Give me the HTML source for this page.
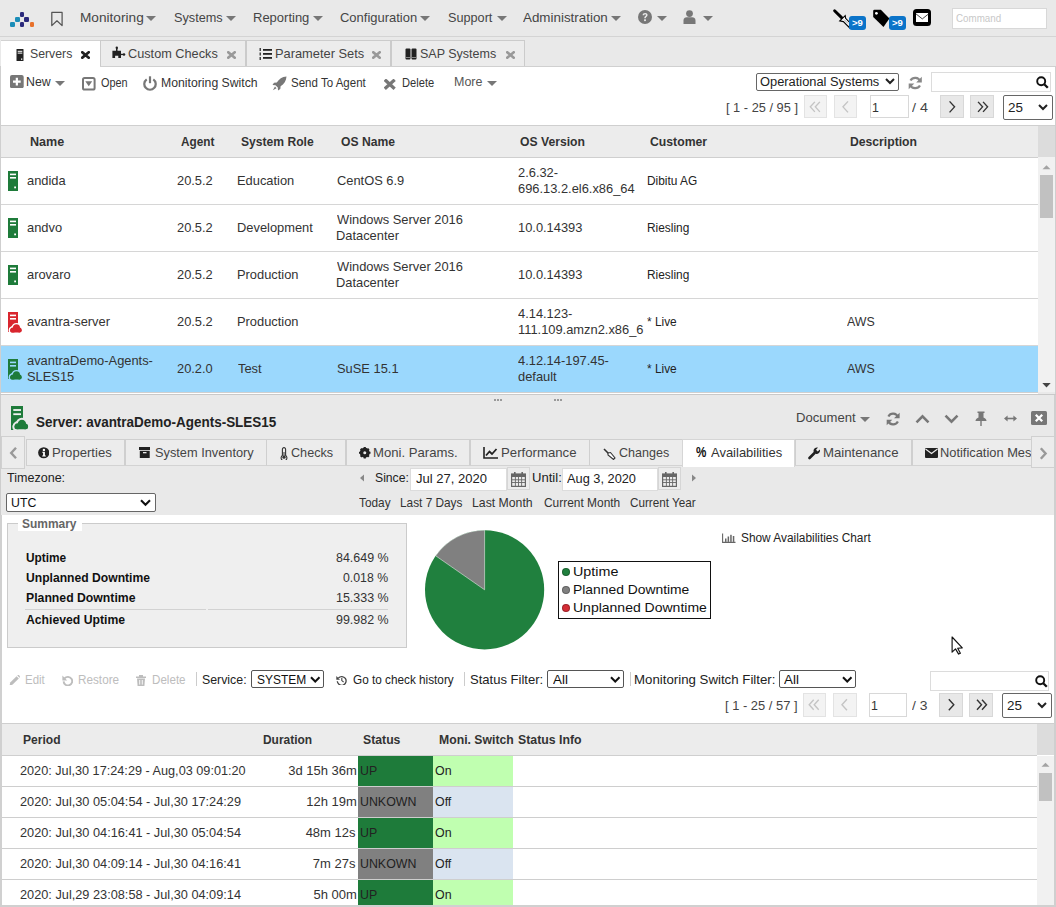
<!DOCTYPE html>
<html><head><meta charset="utf-8">
<style>
*{box-sizing:border-box;margin:0;padding:0}
html,body{width:1056px;height:907px;overflow:hidden;background:#e9e9e9;font-family:"Liberation Sans",sans-serif;color:#333;font-size:13px;position:relative}
</style></head><body>
<div style="position:absolute;left:0px;top:0px;width:1056px;height:36px;background:#e9e9e9"></div>
<div style="position:absolute;left:0px;top:36px;width:1056px;height:1px;background:#d4d4d4"></div>
<div style="position:absolute;left:10.2px;top:22.1px;width:4.7px;height:4.7px;background:#1b8db8;border-radius:1.3px"></div>
<div style="position:absolute;left:15.2px;top:17.1px;width:4.7px;height:4.7px;background:#1b8db8;border-radius:1.3px"></div>
<div style="position:absolute;left:19.7px;top:12.1px;width:4.7px;height:4.7px;background:#2b2a7c;border-radius:1.3px"></div>
<div style="position:absolute;left:24.4px;top:17.1px;width:4.7px;height:4.7px;background:#2b2a7c;border-radius:1.3px"></div>
<div style="position:absolute;left:19.7px;top:22.1px;width:4.7px;height:4.7px;background:#2b2a7c;border-radius:1.3px"></div>
<div style="position:absolute;left:29.5px;top:22.1px;width:4.7px;height:4.7px;background:#e8712b;border-radius:1.3px"></div>
<svg style="position:absolute;left:50px;top:11px" width="14" height="17" viewBox="0 0 14 17"><path d="M1.8 1.4 H12.1 V14.6 L6.95 9.8 L1.8 14.6 Z" fill="none" stroke="#555" stroke-width="1.25" stroke-linejoin="round"/></svg>
<div style="position:absolute;left:79.69px;top:11px;font-size:13.5px;line-height:13.5px;font-weight:400;color:#454545;white-space:pre;transform:scaleX(1.0110);transform-origin:0 0;">Monitoring</div>
<svg style="position:absolute;left:146.2px;top:16.3px" width="10" height="5" viewBox="0 0 10 5"><path d="M0 0 H10 L5.0 5 Z" fill="#777"/></svg>
<div style="position:absolute;left:173.60px;top:11px;font-size:13.5px;line-height:13.5px;font-weight:400;color:#454545;white-space:pre;transform:scaleX(0.9402);transform-origin:0 0;">Systems</div>
<svg style="position:absolute;left:226.2px;top:16.3px" width="10" height="5" viewBox="0 0 10 5"><path d="M0 0 H10 L5.0 5 Z" fill="#777"/></svg>
<div style="position:absolute;left:252.64px;top:11px;font-size:13.5px;line-height:13.5px;font-weight:400;color:#454545;white-space:pre;transform:scaleX(0.9627);transform-origin:0 0;">Reporting</div>
<svg style="position:absolute;left:312.7px;top:16.3px" width="10" height="5" viewBox="0 0 10 5"><path d="M0 0 H10 L5.0 5 Z" fill="#777"/></svg>
<div style="position:absolute;left:339.90px;top:11px;font-size:13.5px;line-height:13.5px;font-weight:400;color:#454545;white-space:pre;transform:scaleX(0.9600);transform-origin:0 0;">Configuration</div>
<svg style="position:absolute;left:420px;top:16.3px" width="10" height="5" viewBox="0 0 10 5"><path d="M0 0 H10 L5.0 5 Z" fill="#777"/></svg>
<div style="position:absolute;left:447.60px;top:11px;font-size:13.5px;line-height:13.5px;font-weight:400;color:#454545;white-space:pre;transform:scaleX(0.9383);transform-origin:0 0;">Support</div>
<svg style="position:absolute;left:496.5px;top:16.3px" width="10" height="5" viewBox="0 0 10 5"><path d="M0 0 H10 L5.0 5 Z" fill="#777"/></svg>
<div style="position:absolute;left:523.20px;top:11px;font-size:13.5px;line-height:13.5px;font-weight:400;color:#454545;white-space:pre;transform:scaleX(0.9914);transform-origin:0 0;">Administration</div>
<svg style="position:absolute;left:611px;top:16.3px" width="10" height="5" viewBox="0 0 10 5"><path d="M0 0 H10 L5.0 5 Z" fill="#777"/></svg>
<svg style="position:absolute;left:638px;top:10.4px" width="14" height="14" viewBox="0 0 14 14"><circle cx="7" cy="7" r="7" fill="#777"/><path d="M4.6 5.3 C4.6 3.6 5.8 2.9 7.1 2.9 C8.6 2.9 9.6 3.8 9.6 5 C9.6 6.6 7.8 6.7 7.8 8.3 H6.2 C6.2 6.2 8 6.2 8 5.1 C8 4.6 7.6 4.3 7.1 4.3 C6.5 4.3 6.2 4.7 6.1 5.3 Z" fill="#e9e9e9"/><rect x="6.1" y="9.3" width="1.8" height="1.8" fill="#e9e9e9"/></svg>
<svg style="position:absolute;left:656.7px;top:16.3px" width="10" height="5" viewBox="0 0 10 5"><path d="M0 0 H10 L5.0 5 Z" fill="#777"/></svg>
<svg style="position:absolute;left:683px;top:10px" width="13" height="14" viewBox="0 0 13 14"><circle cx="6.5" cy="3.6" r="3.4" fill="#777"/><path d="M0.5 14 V10.5 C0.5 8.3 2 7.3 3.8 7.3 H9.2 C11 7.3 12.5 8.3 12.5 10.5 V14 Z" fill="#777"/></svg>
<svg style="position:absolute;left:702.5px;top:16.3px" width="10" height="5" viewBox="0 0 10 5"><path d="M0 0 H10 L5.0 5 Z" fill="#777"/></svg>
<svg style="position:absolute;left:832px;top:8px" width="20" height="22" viewBox="0 0 20 22"><path d="M2.6 2.8 L9.6 9.6" stroke="#000" stroke-width="2.9" stroke-linecap="round"/><path d="M7.8 12.9 L13.2 7.6 L13.6 10.3 L17.6 14.4 L17.4 19.6 L11.4 13.6 Z" fill="#fff" stroke="#000" stroke-width="1.15" stroke-linejoin="miter"/><path d="M12 11.5 L16 15.5" stroke="#888" stroke-width="0.8"/></svg>
<div style="position:absolute;left:849.2px;top:16px;width:16.7px;height:13.9px;background:#0b74c9;border-radius:3px"></div>
<div style="position:absolute;left:851.90px;top:19px;font-size:9px;line-height:9px;font-weight:700;color:#fff;white-space:pre;transform:scaleX(1.0628);transform-origin:0 0;">&gt;9</div>
<svg style="position:absolute;left:872px;top:8px" width="20" height="20" viewBox="0 0 20 20"><path d="M1.2 3 Q1.2 1.8 2.4 1.8 H8.9 L17.4 10.6 L11.5 18.9 L1.2 8.9 Z" fill="#000"/><circle cx="4.4" cy="5.3" r="1.35" fill="#fff"/></svg>
<div style="position:absolute;left:889.2px;top:15.9px;width:16.7px;height:13.9px;background:#0b74c9;border-radius:3px"></div>
<div style="position:absolute;left:891.90px;top:19px;font-size:9px;line-height:9px;font-weight:700;color:#fff;white-space:pre;transform:scaleX(1.0628);transform-origin:0 0;">&gt;9</div>
<div style="position:absolute;left:913.1px;top:8.5px;width:17.7px;height:17.7px;background:#000;border-radius:3.5px"></div>
<div style="position:absolute;left:915.6px;top:13px;width:12.6px;height:8.7px;background:#fff"></div>
<svg style="position:absolute;left:915.6px;top:13px" width="13" height="9" viewBox="0 0 13 9"><path d="M0 0.9 L6.3 5.9 L12.6 0.9" fill="none" stroke="#333" stroke-width="0.9"/></svg>
<div style="position:absolute;left:952px;top:8.4px;width:95px;height:21px;background:#fff;border:1px solid #d8d8d8"></div>
<div style="position:absolute;left:956.00px;top:13px;font-size:11.5px;line-height:11.5px;font-weight:400;color:#c8c8c8;white-space:pre;transform:scaleX(0.8509);transform-origin:0 0;">Command</div>
<div style="position:absolute;left:0px;top:37px;width:1056px;height:29px;background:#e9e9e9"></div>
<div style="position:absolute;left:1px;top:40px;width:99px;height:27px;background:#fff;border-top:1px solid #d2d2d2"></div>
<div style="position:absolute;left:99.5px;top:40px;width:146.5px;height:26.5px;background:#ececec;border:1px solid #cbcbcb;border-left-width:1.5px;border-bottom:none"></div>
<div style="position:absolute;left:245.5px;top:40px;width:145.5px;height:26.5px;background:#ececec;border:1px solid #cbcbcb;border-left-width:1.5px;border-bottom:none"></div>
<div style="position:absolute;left:390.5px;top:40px;width:134.5px;height:26.5px;background:#ececec;border:1px solid #cbcbcb;border-left-width:1.5px;border-bottom:none"></div>
<svg style="position:absolute;left:16px;top:48.5px" width="8" height="12" viewBox="0 0 8 12"><rect x="0.5" y="0" width="7" height="12" rx="0.6" fill="#222"/><rect x="1.7" y="1.8" width="4.6" height="1" fill="#fff"/><rect x="1.7" y="3.6" width="4.6" height="1" fill="#fff"/><rect x="5" y="9.5" width="1.3" height="1.3" fill="#fff"/></svg>
<div style="position:absolute;left:29.50px;top:47px;font-size:13.5px;line-height:13.5px;font-weight:400;color:#444;white-space:pre;transform:scaleX(0.9089);transform-origin:0 0;">Servers</div>
<svg style="position:absolute;left:80.5px;top:50.8px" width="9" height="8" viewBox="0 0 9 8"><path d="M1.3 1.3 L7.7 6.7 M7.7 1.3 L1.3 6.7" stroke="#222" stroke-width="2.7" stroke-linecap="square"/></svg>
<svg style="position:absolute;left:112px;top:46px" width="14" height="13" viewBox="0 0 14 13"><path d="M0.4 4.8 H9 V11.9 H6.3 V9.8 H3.1 V11.9 H0.4 Z" fill="#222"/><rect x="4" y="1.8" width="1.5" height="3.2" fill="#222"/><circle cx="4.8" cy="1.8" r="1.2" fill="#222"/><rect x="9" y="7.8" width="2.5" height="1.3" fill="#222"/><circle cx="12" cy="8.4" r="1.25" fill="#222"/></svg>
<div style="position:absolute;left:128.00px;top:47px;font-size:13.5px;line-height:13.5px;font-weight:400;color:#444;white-space:pre;transform:scaleX(0.9421);transform-origin:0 0;">Custom Checks</div>
<svg style="position:absolute;left:227px;top:51px" width="9" height="8" viewBox="0 0 9 8"><path d="M1.3 1.3 L7.7 6.7 M7.7 1.3 L1.3 6.7" stroke="#999" stroke-width="2.6" stroke-linecap="square"/></svg>
<svg style="position:absolute;left:259.3px;top:47.5px" width="13" height="12" viewBox="0 0 13 12"><rect x="4" y="1" width="9" height="1.8" fill="#222"/><rect x="4" y="5" width="9" height="1.8" fill="#222"/><rect x="4" y="9" width="9" height="1.8" fill="#222"/><rect x="0.5" y="0" width="1.5" height="3" fill="#444"/><rect x="0.5" y="4.5" width="1.5" height="3" fill="#444"/><rect x="0.5" y="9" width="1.5" height="3" fill="#444"/></svg>
<div style="position:absolute;left:274.55px;top:47px;font-size:13.5px;line-height:13.5px;font-weight:400;color:#444;white-space:pre;transform:scaleX(0.9512);transform-origin:0 0;">Parameter Sets</div>
<svg style="position:absolute;left:372px;top:51px" width="9" height="8" viewBox="0 0 9 8"><path d="M1.3 1.3 L7.7 6.7 M7.7 1.3 L1.3 6.7" stroke="#999" stroke-width="2.6" stroke-linecap="square"/></svg>
<svg style="position:absolute;left:404.8px;top:47.5px" width="12" height="12" viewBox="0 0 12 12"><rect x="0.5" y="0.5" width="5" height="11" rx="1" fill="#222"/><rect x="6.5" y="0.5" width="5" height="11" rx="1" fill="#222"/><rect x="0.5" y="9" width="11" height="1" fill="#888"/></svg>
<div style="position:absolute;left:420.40px;top:47px;font-size:13.5px;line-height:13.5px;font-weight:400;color:#444;white-space:pre;transform:scaleX(0.9254);transform-origin:0 0;">SAP Systems</div>
<svg style="position:absolute;left:505.6px;top:51px" width="9" height="8" viewBox="0 0 9 8"><path d="M1.3 1.3 L7.7 6.7 M7.7 1.3 L1.3 6.7" stroke="#999" stroke-width="2.6" stroke-linecap="square"/></svg>
<div style="position:absolute;left:0px;top:66px;width:1056px;height:59px;background:#fff"></div>
<div style="position:absolute;left:100px;top:66px;width:956px;height:1px;background:#d0d0d0"></div>
<div style="position:absolute;left:0px;top:66px;width:1px;height:60px;background:#cfcfcf"></div>
<div style="position:absolute;left:1055px;top:66px;width:1px;height:60px;background:#cfcfcf"></div>
<svg style="position:absolute;left:10px;top:74.8px" width="14" height="13.5" viewBox="0 0 14 13.5"><rect x="0" y="0" width="13.7" height="13.3" rx="2" fill="#777"/><path d="M6.85 2.8 V10.5 M3 6.65 H10.7" stroke="#fff" stroke-width="2.2"/></svg>
<div style="position:absolute;left:26.00px;top:76px;font-size:12px;line-height:12px;font-weight:400;color:#333;white-space:pre;transform:scaleX(1.0271);transform-origin:0 0;">New</div>
<svg style="position:absolute;left:55px;top:80.5px" width="10" height="5" viewBox="0 0 10 5"><path d="M0 0 H10 L5.0 5 Z" fill="#777"/></svg>
<svg style="position:absolute;left:82px;top:76.5px" width="14" height="14" viewBox="0 0 14 14"><rect x="1" y="1" width="11.6" height="11.5" rx="1.6" fill="none" stroke="#777" stroke-width="2"/><path d="M3.3 4.3 H10.2 L6.75 9.3 Z" fill="#777"/></svg>
<div style="position:absolute;left:101.00px;top:77px;font-size:12px;line-height:12px;font-weight:400;color:#333;white-space:pre;transform:scaleX(0.9065);transform-origin:0 0;">Open</div>
<svg style="position:absolute;left:143px;top:75.5px" width="14" height="15" viewBox="0 0 14 15"><path d="M3.7 3.4 A5.7 5.7 0 1 0 10.3 3.4" fill="none" stroke="#777" stroke-width="2.2"/><path d="M7 0.3 V7.2" stroke="#777" stroke-width="2.2"/></svg>
<div style="position:absolute;left:161.00px;top:77px;font-size:12px;line-height:12px;font-weight:400;color:#333;white-space:pre;transform:scaleX(1.0209);transform-origin:0 0;">Monitoring Switch</div>
<svg style="position:absolute;left:272px;top:76px" width="15" height="15" viewBox="0 0 15 15"><path d="M14.5 0.5 C10 0.8 7 3 4.8 6.5 L2 6.8 L0.5 9 L3.5 9.3 L5.8 11.5 L6 14.5 L8.3 13 L8.6 10.3 C12 8 14.3 5 14.5 0.5 Z" fill="#777"/><path d="M3 10.5 L0.8 14.3 L4.5 12.2 Z" fill="#777"/></svg>
<div style="position:absolute;left:291.00px;top:77px;font-size:12px;line-height:12px;font-weight:400;color:#333;white-space:pre;transform:scaleX(0.9604);transform-origin:0 0;">Send To Agent</div>
<svg style="position:absolute;left:384px;top:79px" width="11.5" height="10.5" viewBox="0 0 11.5 10.5"><path d="M2 1.8 L9.5 8.7 M9.5 1.8 L2 8.7" stroke="#777" stroke-width="3.2" stroke-linecap="square"/></svg>
<div style="position:absolute;left:401.50px;top:77px;font-size:12px;line-height:12px;font-weight:400;color:#333;white-space:pre;transform:scaleX(0.9282);transform-origin:0 0;">Delete</div>
<div style="position:absolute;left:454.00px;top:76px;font-size:12px;line-height:12px;font-weight:400;color:#555;white-space:pre;transform:scaleX(1.0392);transform-origin:0 0;">More</div>
<svg style="position:absolute;left:487px;top:80.5px" width="10" height="5" viewBox="0 0 10 5"><path d="M0 0 H10 L5.0 5 Z" fill="#777"/></svg>
<div style="position:absolute;left:755.6px;top:72.6px;width:143px;height:18.2px;background:#fff;border:1px solid #666;border-radius:2px"></div>
<div style="position:absolute;left:760.00px;top:76px;font-size:12.5px;line-height:12.5px;font-weight:400;color:#222;white-space:pre;transform:scaleX(1.0279);transform-origin:0 0;">Operational Systems</div>
<svg style="position:absolute;left:884.5px;top:78px" width="10" height="7" viewBox="0 0 10 7"><path d="M1 1 L5 5 L9 1" fill="none" stroke="#222" stroke-width="2"/></svg>
<svg style="position:absolute;left:907.6px;top:75.6px" width="15" height="14" viewBox="0 0 15 14"><path d="M12.3 5.2 A5.5 5.5 0 0 0 2.5 4.5" fill="none" stroke="#888" stroke-width="2.2"/><path d="M13.8 0.8 V6.5 H8.2 Z" fill="#888"/><path d="M2.2 8.8 A5.5 5.5 0 0 0 12 9.5" fill="none" stroke="#888" stroke-width="2.2"/><path d="M0.7 13.2 V7.5 H6.3 Z" fill="#888"/></svg>
<div style="position:absolute;left:931px;top:72px;width:120px;height:20px;background:#fff;border:1px solid #dcdcdc"></div>
<svg style="position:absolute;left:1036px;top:75.5px" width="13" height="13" viewBox="0 0 13 13"><circle cx="5.2" cy="5.2" r="4" fill="none" stroke="#111" stroke-width="1.9"/><path d="M8.2 8.2 L11.8 11.8" stroke="#111" stroke-width="2.3"/></svg>
<div style="position:absolute;left:726.00px;top:102px;font-size:12.5px;line-height:12.5px;font-weight:400;color:#444;white-space:pre;transform:scaleX(1.0257);transform-origin:0 0;">[ 1 - 25 / 95 ]</div>
<div style="position:absolute;left:804.3px;top:95.3px;width:23.100000000000023px;height:23.10000000000001px;background:#f3f3f3;border:1px solid #e3e3e3"></div>
<svg style="position:absolute;left:0;top:0" width="1056" height="907"><path d="M814.8499999999999 101.85 L810.3499999999999 106.85 L814.8499999999999 111.85 M819.8499999999999 101.85 L815.3499999999999 106.85 L819.8499999999999 111.85" fill="none" stroke="#c4c4c4" stroke-width="1.4"/></svg>
<div style="position:absolute;left:834.3px;top:95.3px;width:23.0px;height:23.10000000000001px;background:#f3f3f3;border:1px solid #e3e3e3"></div>
<svg style="position:absolute;left:0;top:0" width="1056" height="907"><path d="M848.0 101.35 L843.0 106.85 L848.0 112.35" fill="none" stroke="#c4c4c4" stroke-width="1.4"/></svg>
<div style="position:absolute;left:870px;top:95.3px;width:38.5px;height:23.1px;background:#fff;border:1px solid #d8d8d8"></div>
<div style="position:absolute;left:872.30px;top:102px;font-size:12.5px;line-height:12.5px;font-weight:400;color:#333;white-space:pre;transform:scaleX(0.9900);transform-origin:0 0;">1</div>
<div style="position:absolute;left:912.00px;top:102px;font-size:12.5px;line-height:12.5px;font-weight:400;color:#444;white-space:pre;transform:scaleX(1.1473);transform-origin:0 0;">/ 4</div>
<div style="position:absolute;left:940px;top:95.3px;width:23.5px;height:23.10000000000001px;background:#e8e8e8;border:1px solid #d8d8d8"></div>
<svg style="position:absolute;left:0;top:0" width="1056" height="907"><path d="M949.55 101.35 L954.55 106.85 L949.55 112.35" fill="none" stroke="#333" stroke-width="1.4"/></svg>
<div style="position:absolute;left:970.4px;top:95.3px;width:23.300000000000068px;height:23.10000000000001px;background:#e8e8e8;border:1px solid #d8d8d8"></div>
<svg style="position:absolute;left:0;top:0" width="1056" height="907"><path d="M983.05 101.85 L987.55 106.85 L983.05 111.85 M978.05 101.85 L982.55 106.85 L978.05 111.85" fill="none" stroke="#333" stroke-width="1.4"/></svg>
<div style="position:absolute;left:1003.3px;top:95px;width:49.5px;height:25px;background:#fff;border:1px solid #666;border-radius:2px"></div>
<div style="position:absolute;left:1008.00px;top:102px;font-size:12.5px;line-height:12.5px;font-weight:400;color:#222;white-space:pre;transform:scaleX(1.0751);transform-origin:0 0;">25</div>
<svg style="position:absolute;left:1038px;top:104px" width="10" height="7" viewBox="0 0 10 7"><path d="M1 1 L5 5 L9 1" fill="none" stroke="#222" stroke-width="2"/></svg>
<div style="position:absolute;left:0px;top:125px;width:1056px;height:1px;background:#cfcfcf"></div>
<div style="position:absolute;left:0px;top:126px;width:1038px;height:31px;background:#ececec"></div>
<div style="position:absolute;left:1038px;top:126px;width:17px;height:31px;background:#dcdcdc"></div>
<div style="position:absolute;left:0px;top:157px;width:1038px;height:1px;background:#cfcfcf"></div>
<div style="position:absolute;left:30.00px;top:135px;font-size:13px;line-height:13px;font-weight:700;color:#333;white-space:pre;transform:scaleX(0.9665);transform-origin:0 0;">Name</div>
<div style="position:absolute;left:180.50px;top:135px;font-size:13px;line-height:13px;font-weight:700;color:#333;white-space:pre;transform:scaleX(0.9067);transform-origin:0 0;">Agent</div>
<div style="position:absolute;left:240.50px;top:135px;font-size:13px;line-height:13px;font-weight:700;color:#333;white-space:pre;transform:scaleX(0.9319);transform-origin:0 0;">System Role</div>
<div style="position:absolute;left:340.50px;top:135px;font-size:13px;line-height:13px;font-weight:700;color:#333;white-space:pre;transform:scaleX(0.9336);transform-origin:0 0;">OS Name</div>
<div style="position:absolute;left:520.00px;top:135px;font-size:13px;line-height:13px;font-weight:700;color:#333;white-space:pre;transform:scaleX(0.9363);transform-origin:0 0;">OS Version</div>
<div style="position:absolute;left:650.00px;top:135px;font-size:13px;line-height:13px;font-weight:700;color:#333;white-space:pre;transform:scaleX(0.9403);transform-origin:0 0;">Customer</div>
<div style="position:absolute;left:850.00px;top:135px;font-size:13px;line-height:13px;font-weight:700;color:#333;white-space:pre;transform:scaleX(0.9361);transform-origin:0 0;">Description</div>
<div style="position:absolute;left:0px;top:158px;width:1038px;height:46px;background:#fff"></div>
<div style="position:absolute;left:0px;top:204px;width:1038px;height:1px;background:#d6d6d6"></div>
<div style="position:absolute;left:0px;top:205px;width:1038px;height:46px;background:#fff"></div>
<div style="position:absolute;left:0px;top:251px;width:1038px;height:1px;background:#d6d6d6"></div>
<div style="position:absolute;left:0px;top:252px;width:1038px;height:46px;background:#fff"></div>
<div style="position:absolute;left:0px;top:298px;width:1038px;height:1px;background:#d6d6d6"></div>
<div style="position:absolute;left:0px;top:299px;width:1038px;height:46px;background:#fff"></div>
<div style="position:absolute;left:0px;top:345px;width:1038px;height:1px;background:#d6d6d6"></div>
<div style="position:absolute;left:0px;top:346px;width:1038px;height:46px;background:#9bd8fd"></div>
<div style="position:absolute;left:0px;top:392px;width:1038px;height:2px;background:#fff"></div>
<div style="position:absolute;left:0px;top:392px;width:1038px;height:1px;background:#cfcfcf"></div>
<div style="position:absolute;left:0px;top:125px;width:1px;height:270px;background:#cfcfcf"></div>
<div style="position:absolute;left:1055px;top:125px;width:1px;height:270px;background:#cfcfcf"></div>
<div style="position:absolute;left:1038px;top:157px;width:17px;height:235px;background:#f1f1f1"></div>
<svg style="position:absolute;left:1038px;top:157px" width="17" height="235" viewBox="0 0 17 235"><path d="M4.5 12.3 H12.5 L8.5 8.3 Z" fill="#a3a3a3"/><path d="M4.3 226 H12.7 L8.5 230.4 Z" fill="#444"/></svg>
<div style="position:absolute;left:1040px;top:175px;width:13px;height:42.5px;background:#c1c1c1"></div>
<svg style="position:absolute;left:8px;top:170.8px" width="10" height="20" viewBox="0 0 10 20"><rect x="0" y="0" width="10" height="20" fill="#1e7b3a"/><rect x="2" y="2.6" width="6" height="1.6" fill="#fff"/><rect x="2" y="6" width="6" height="1.6" fill="#fff"/><rect x="6.2" y="15.5" width="1.8" height="1.8" fill="#fff"/></svg>
<div style="position:absolute;left:26.90px;top:174px;font-size:13px;line-height:13px;font-weight:400;color:#333;white-space:pre;transform:scaleX(0.9900);transform-origin:0 0;">andida</div>
<div style="position:absolute;left:177.10px;top:174px;font-size:13px;line-height:13px;font-weight:400;color:#333;white-space:pre;transform:scaleX(0.9885);transform-origin:0 0;">20.5.2</div>
<div style="position:absolute;left:236.51px;top:174px;font-size:13px;line-height:13px;font-weight:400;color:#333;white-space:pre;transform:scaleX(0.9900);transform-origin:0 0;">Education</div>
<div style="position:absolute;left:337.30px;top:174px;font-size:13px;line-height:13px;font-weight:400;color:#333;white-space:pre;transform:scaleX(0.9900);transform-origin:0 0;">CentOS 6.9</div>
<div style="position:absolute;left:517.50px;top:166px;font-size:13px;line-height:13px;font-weight:400;color:#333;white-space:pre;transform:scaleX(0.9900);transform-origin:0 0;">2.6.32-</div>
<div style="position:absolute;left:517.50px;top:182px;font-size:13px;line-height:13px;font-weight:400;color:#333;white-space:pre;transform:scaleX(0.9900);transform-origin:0 0;">696.13.2.el6.x86_64</div>
<div style="position:absolute;left:646.90px;top:175px;font-size:12px;line-height:12px;font-weight:400;color:#222;white-space:pre;transform:scaleX(0.9900);transform-origin:0 0;">Dibitu AG</div>
<svg style="position:absolute;left:8px;top:217.8px" width="10" height="20" viewBox="0 0 10 20"><rect x="0" y="0" width="10" height="20" fill="#1e7b3a"/><rect x="2" y="2.6" width="6" height="1.6" fill="#fff"/><rect x="2" y="6" width="6" height="1.6" fill="#fff"/><rect x="6.2" y="15.5" width="1.8" height="1.8" fill="#fff"/></svg>
<div style="position:absolute;left:26.90px;top:221px;font-size:13px;line-height:13px;font-weight:400;color:#333;white-space:pre;transform:scaleX(0.9900);transform-origin:0 0;">andvo</div>
<div style="position:absolute;left:177.10px;top:221px;font-size:13px;line-height:13px;font-weight:400;color:#333;white-space:pre;transform:scaleX(0.9885);transform-origin:0 0;">20.5.2</div>
<div style="position:absolute;left:236.51px;top:221px;font-size:13px;line-height:13px;font-weight:400;color:#333;white-space:pre;transform:scaleX(0.9900);transform-origin:0 0;">Development</div>
<div style="position:absolute;left:337.30px;top:213px;font-size:13px;line-height:13px;font-weight:400;color:#333;white-space:pre;transform:scaleX(0.9900);transform-origin:0 0;">Windows Server 2016</div>
<div style="position:absolute;left:336.31px;top:229px;font-size:13px;line-height:13px;font-weight:400;color:#333;white-space:pre;transform:scaleX(0.9900);transform-origin:0 0;">Datacenter</div>
<div style="position:absolute;left:517.50px;top:221px;font-size:13px;line-height:13px;font-weight:400;color:#333;white-space:pre;transform:scaleX(0.9900);transform-origin:0 0;">10.0.14393</div>
<div style="position:absolute;left:646.90px;top:222px;font-size:12px;line-height:12px;font-weight:400;color:#222;white-space:pre;transform:scaleX(0.9900);transform-origin:0 0;">Riesling</div>
<svg style="position:absolute;left:8px;top:264.8px" width="10" height="20" viewBox="0 0 10 20"><rect x="0" y="0" width="10" height="20" fill="#1e7b3a"/><rect x="2" y="2.6" width="6" height="1.6" fill="#fff"/><rect x="2" y="6" width="6" height="1.6" fill="#fff"/><rect x="6.2" y="15.5" width="1.8" height="1.8" fill="#fff"/></svg>
<div style="position:absolute;left:26.90px;top:268px;font-size:13px;line-height:13px;font-weight:400;color:#333;white-space:pre;transform:scaleX(0.9900);transform-origin:0 0;">arovaro</div>
<div style="position:absolute;left:177.10px;top:268px;font-size:13px;line-height:13px;font-weight:400;color:#333;white-space:pre;transform:scaleX(0.9885);transform-origin:0 0;">20.5.2</div>
<div style="position:absolute;left:236.51px;top:268px;font-size:13px;line-height:13px;font-weight:400;color:#333;white-space:pre;transform:scaleX(0.9900);transform-origin:0 0;">Production</div>
<div style="position:absolute;left:337.30px;top:260px;font-size:13px;line-height:13px;font-weight:400;color:#333;white-space:pre;transform:scaleX(0.9900);transform-origin:0 0;">Windows Server 2016</div>
<div style="position:absolute;left:336.31px;top:276px;font-size:13px;line-height:13px;font-weight:400;color:#333;white-space:pre;transform:scaleX(0.9900);transform-origin:0 0;">Datacenter</div>
<div style="position:absolute;left:517.50px;top:268px;font-size:13px;line-height:13px;font-weight:400;color:#333;white-space:pre;transform:scaleX(0.9900);transform-origin:0 0;">10.0.14393</div>
<div style="position:absolute;left:646.90px;top:269px;font-size:12px;line-height:12px;font-weight:400;color:#222;white-space:pre;transform:scaleX(0.9900);transform-origin:0 0;">Riesling</div>
<svg style="position:absolute;left:8px;top:311.8px" width="10" height="20" viewBox="0 0 10 20"><rect x="0" y="0" width="10" height="20" fill="#d9262e"/><rect x="2" y="2.6" width="6" height="1.6" fill="#fff"/><rect x="2" y="6" width="6" height="1.6" fill="#fff"/></svg>
<svg style="position:absolute;left:8.3px;top:321.56px" width="15.4" height="12.01" viewBox="0 0 15.4 12.012"><g transform="scale(0.77) translate(2 2)"><g fill="#fff" stroke="#fff" stroke-width="3.6"><rect x="0.6" y="6.4" width="15.2" height="5.2" rx="2.6"/><circle cx="4.3" cy="8.3" r="3.3"/><circle cx="9" cy="5.6" r="4.6"/><circle cx="12.6" cy="8.4" r="3.2"/></g><g fill="#d9262e"><rect x="0.6" y="6.4" width="15.2" height="5.2" rx="2.6"/><circle cx="4.3" cy="8.3" r="3.3"/><circle cx="9" cy="5.6" r="4.6"/><circle cx="12.6" cy="8.4" r="3.2"/></g></g></svg>
<div style="position:absolute;left:26.90px;top:315px;font-size:13px;line-height:13px;font-weight:400;color:#333;white-space:pre;transform:scaleX(0.9900);transform-origin:0 0;">avantra-server</div>
<div style="position:absolute;left:177.10px;top:315px;font-size:13px;line-height:13px;font-weight:400;color:#333;white-space:pre;transform:scaleX(0.9885);transform-origin:0 0;">20.5.2</div>
<div style="position:absolute;left:236.51px;top:315px;font-size:13px;line-height:13px;font-weight:400;color:#333;white-space:pre;transform:scaleX(0.9900);transform-origin:0 0;">Production</div>
<div style="position:absolute;left:517.50px;top:307px;font-size:13px;line-height:13px;font-weight:400;color:#333;white-space:pre;transform:scaleX(0.9900);transform-origin:0 0;">4.14.123-</div>
<div style="position:absolute;left:517.50px;top:323px;font-size:13px;line-height:13px;font-weight:400;color:#333;white-space:pre;transform:scaleX(0.9900);transform-origin:0 0;">111.109.amzn2.x86_6</div>
<div style="position:absolute;left:646.90px;top:316px;font-size:12px;line-height:12px;font-weight:400;color:#222;white-space:pre;transform:scaleX(0.9900);transform-origin:0 0;">* Live</div>
<div style="position:absolute;left:847.00px;top:316px;font-size:12.5px;line-height:12.5px;font-weight:400;color:#333;white-space:pre;transform:scaleX(0.9900);transform-origin:0 0;">AWS</div>
<svg style="position:absolute;left:8px;top:358.8px" width="10" height="20" viewBox="0 0 10 20"><rect x="0" y="0" width="10" height="20" fill="#1e7b3a"/><rect x="2" y="2.6" width="6" height="1.6" fill="#9bd8fd"/><rect x="2" y="6" width="6" height="1.6" fill="#9bd8fd"/></svg>
<svg style="position:absolute;left:8.3px;top:368.56px" width="15.4" height="12.01" viewBox="0 0 15.4 12.012"><g transform="scale(0.77) translate(2 2)"><g fill="#9bd8fd" stroke="#9bd8fd" stroke-width="3.6"><rect x="0.6" y="6.4" width="15.2" height="5.2" rx="2.6"/><circle cx="4.3" cy="8.3" r="3.3"/><circle cx="9" cy="5.6" r="4.6"/><circle cx="12.6" cy="8.4" r="3.2"/></g><g fill="#1e7b3a"><rect x="0.6" y="6.4" width="15.2" height="5.2" rx="2.6"/><circle cx="4.3" cy="8.3" r="3.3"/><circle cx="9" cy="5.6" r="4.6"/><circle cx="12.6" cy="8.4" r="3.2"/></g></g></svg>
<div style="position:absolute;left:26.90px;top:354px;font-size:13px;line-height:13px;font-weight:400;color:#333;white-space:pre;transform:scaleX(0.9900);transform-origin:0 0;">avantraDemo-Agents-</div>
<div style="position:absolute;left:26.90px;top:370px;font-size:13px;line-height:13px;font-weight:400;color:#333;white-space:pre;transform:scaleX(0.9900);transform-origin:0 0;">SLES15</div>
<div style="position:absolute;left:177.10px;top:362px;font-size:13px;line-height:13px;font-weight:400;color:#333;white-space:pre;transform:scaleX(0.9885);transform-origin:0 0;">20.2.0</div>
<div style="position:absolute;left:237.50px;top:362px;font-size:13px;line-height:13px;font-weight:400;color:#333;white-space:pre;transform:scaleX(0.9900);transform-origin:0 0;">Test</div>
<div style="position:absolute;left:337.30px;top:362px;font-size:13px;line-height:13px;font-weight:400;color:#333;white-space:pre;transform:scaleX(0.9900);transform-origin:0 0;">SuSE 15.1</div>
<div style="position:absolute;left:517.50px;top:354px;font-size:13px;line-height:13px;font-weight:400;color:#333;white-space:pre;transform:scaleX(0.9900);transform-origin:0 0;">4.12.14-197.45-</div>
<div style="position:absolute;left:517.50px;top:370px;font-size:13px;line-height:13px;font-weight:400;color:#333;white-space:pre;transform:scaleX(0.9900);transform-origin:0 0;">default</div>
<div style="position:absolute;left:646.90px;top:363px;font-size:12px;line-height:12px;font-weight:400;color:#222;white-space:pre;transform:scaleX(0.9900);transform-origin:0 0;">* Live</div>
<div style="position:absolute;left:847.00px;top:363px;font-size:12.5px;line-height:12.5px;font-weight:400;color:#333;white-space:pre;transform:scaleX(0.9900);transform-origin:0 0;">AWS</div>
<div style="position:absolute;left:0px;top:394px;width:1056px;height:1px;background:#c9c9c9"></div>
<div style="position:absolute;left:0px;top:395px;width:1056px;height:120px;background:#e9e9e9"></div>
<div style="position:absolute;left:0px;top:395px;width:1px;height:120px;background:#cdcdcd"></div>
<div style="position:absolute;left:494.3px;top:398.8px;width:2px;height:2px;background:#9a9a9a"></div>
<div style="position:absolute;left:497.3px;top:398.8px;width:2px;height:2px;background:#9a9a9a"></div>
<div style="position:absolute;left:500.3px;top:398.8px;width:2px;height:2px;background:#9a9a9a"></div>
<div style="position:absolute;left:554.3px;top:398.8px;width:2px;height:2px;background:#9a9a9a"></div>
<div style="position:absolute;left:557.3px;top:398.8px;width:2px;height:2px;background:#9a9a9a"></div>
<div style="position:absolute;left:560.3px;top:398.8px;width:2px;height:2px;background:#9a9a9a"></div>
<svg style="position:absolute;left:11px;top:405.9px" width="12.2" height="24" viewBox="0 0 12.2 24"><rect x="0" y="0" width="12.2" height="24" fill="#1e7b3a"/><rect x="2.3" y="3.1" width="7.7" height="1.8" fill="#f4f4f4"/><rect x="2.3" y="7.3" width="7.7" height="1.8" fill="#f4f4f4"/></svg>
<svg style="position:absolute;left:12.059999999999999px;top:417.3px" width="18.0" height="14.04" viewBox="0 0 18.0 14.04"><g transform="scale(0.9) translate(2 2)"><g fill="#e9e9e9" stroke="#e9e9e9" stroke-width="4.4"><rect x="0.6" y="6.4" width="15.2" height="5.2" rx="2.6"/><circle cx="4.3" cy="8.3" r="3.3"/><circle cx="9" cy="5.6" r="4.6"/><circle cx="12.6" cy="8.4" r="3.2"/></g><g fill="#1e7b3a"><rect x="0.6" y="6.4" width="15.2" height="5.2" rx="2.6"/><circle cx="4.3" cy="8.3" r="3.3"/><circle cx="9" cy="5.6" r="4.6"/><circle cx="12.6" cy="8.4" r="3.2"/></g></g></svg>
<div style="position:absolute;left:35.50px;top:415px;font-size:14px;line-height:14px;font-weight:700;color:#222;white-space:pre;transform:scaleX(0.9621);transform-origin:0 0;">Server: avantraDemo-Agents-SLES15</div>
<div style="position:absolute;left:796.19px;top:411px;font-size:13px;line-height:13px;font-weight:400;color:#444;white-space:pre;transform:scaleX(1.0079);transform-origin:0 0;">Document</div>
<svg style="position:absolute;left:860px;top:416.5px" width="10" height="5" viewBox="0 0 10 5"><path d="M0 0 H10 L5.0 5 Z" fill="#777"/></svg>
<svg style="position:absolute;left:885.9px;top:411.5px" width="14.5" height="14" viewBox="0 0 14.5 14"><path d="M12 5 A5.3 5.3 0 0 0 2.4 4.4" fill="none" stroke="#777" stroke-width="2.2"/><path d="M13.6 0.7 V6.3 H8 Z" fill="#777"/><path d="M2.3 9 A5.3 5.3 0 0 0 11.9 9.6" fill="none" stroke="#777" stroke-width="2.2"/><path d="M0.7 13.3 V7.7 H6.3 Z" fill="#777"/></svg>
<svg style="position:absolute;left:915px;top:413.5px" width="15" height="10" viewBox="0 0 15 10"><path d="M1.5 8.3 L7.5 2.3 L13.5 8.3" fill="none" stroke="#777" stroke-width="2.6"/></svg>
<svg style="position:absolute;left:944px;top:413.5px" width="15" height="10" viewBox="0 0 15 10"><path d="M1.5 1.7 L7.5 7.7 L13.5 1.7" fill="none" stroke="#777" stroke-width="2.6"/></svg>
<svg style="position:absolute;left:974.7px;top:411px" width="12" height="15" viewBox="0 0 12 15"><path d="M2.5 0.5 H9.5 V2 H8.5 V6.5 C10.5 7.5 11.5 8.5 11.5 10 H0.5 C0.5 8.5 1.5 7.5 3.5 6.5 V2 H2.5 Z" fill="#777"/><rect x="5.3" y="10" width="1.4" height="5" fill="#777"/></svg>
<svg style="position:absolute;left:1003.5px;top:414.5px" width="13" height="7" viewBox="0 0 13 7"><path d="M3 3.5 H10" stroke="#777" stroke-width="1.6"/><path d="M0 3.5 L3.6 0.5 V6.5 Z M13 3.5 L9.4 0.5 V6.5 Z" fill="#777"/></svg>
<div style="position:absolute;left:1031px;top:411.2px;width:16px;height:14px;background:#777;border-radius:1.5px"></div>
<svg style="position:absolute;left:1031px;top:411.2px" width="16" height="14" viewBox="0 0 16 14"><path d="M4.8 3.8 L11.2 10.2 M11.2 3.8 L4.8 10.2" stroke="#fff" stroke-width="2.3"/></svg>
<div style="position:absolute;left:1.3px;top:436.2px;width:23.7px;height:32.5px;background:#ececec;border:1px solid #d0d0d0"></div>
<svg style="position:absolute;left:8px;top:446px" width="11" height="14" viewBox="0 0 11 14"><path d="M8 1.8 L3.2 7 L8 12.2" fill="none" stroke="#999" stroke-width="2.4"/></svg>
<div style="position:absolute;left:25.6px;top:439px;width:99.9px;height:27px;background:#ececec;border:1px solid #cfcfcf;border-bottom:1px solid #d3d3d3"></div>
<div style="position:absolute;left:125px;top:439px;width:141.8px;height:27px;background:#ececec;border:1px solid #cfcfcf;border-bottom:1px solid #d3d3d3"></div>
<div style="position:absolute;left:266.3px;top:439px;width:80.19999999999999px;height:27px;background:#ececec;border:1px solid #cfcfcf;border-bottom:1px solid #d3d3d3"></div>
<div style="position:absolute;left:346px;top:439px;width:124px;height:27px;background:#ececec;border:1px solid #cfcfcf;border-bottom:1px solid #d3d3d3"></div>
<div style="position:absolute;left:469.5px;top:439px;width:120.0px;height:27px;background:#ececec;border:1px solid #cfcfcf;border-bottom:1px solid #d3d3d3"></div>
<div style="position:absolute;left:589px;top:439px;width:93.5px;height:27px;background:#ececec;border:1px solid #cfcfcf;border-bottom:1px solid #d3d3d3"></div>
<div style="position:absolute;left:682px;top:439px;width:113px;height:27.5px;background:#fff;border:1px solid #d6d6d6;border-bottom:none"></div>
<div style="position:absolute;left:794.5px;top:439px;width:117.5px;height:27px;background:#ececec;border:1px solid #cfcfcf;border-bottom:1px solid #d3d3d3"></div>
<div style="position:absolute;left:911.5px;top:439px;width:128.5px;height:27px;background:#ececec;border:1px solid #cfcfcf;border-bottom:1px solid #d3d3d3"></div>
<div style="position:absolute;left:1031.4px;top:436.3px;width:23.6px;height:32px;background:#ececec;border:1px solid #d0d0d0"></div>
<svg style="position:absolute;left:1036.5px;top:445.5px" width="12" height="15" viewBox="0 0 12 15"><path d="M3.8 2.2 L8.6 7.5 L3.8 12.8" fill="none" stroke="#999" stroke-width="2.4"/></svg>
<svg style="position:absolute;left:37.8px;top:447px" width="11.5" height="11.5" viewBox="0 0 11.5 11.5"><circle cx="5.75" cy="5.75" r="5.6" fill="#222"/><circle cx="5.9" cy="2.9" r="1.2" fill="#fff"/><path d="M4.3 4.8 H6.9 V8.6 H7.8 V9.6 H4.2 V8.6 H5.1 V5.8 H4.3 Z" fill="#fff"/></svg>
<div style="position:absolute;left:51.63px;top:446px;font-size:13.5px;line-height:13.5px;font-weight:400;color:#444;white-space:pre;transform:scaleX(0.9707);transform-origin:0 0;">Properties</div>
<svg style="position:absolute;left:138.6px;top:447px" width="11.5" height="11" viewBox="0 0 11.5 11"><rect x="0" y="0" width="11.5" height="3" fill="#222"/><rect x="0.8" y="3.8" width="9.9" height="7.2" fill="#222"/><rect x="4" y="5" width="3.5" height="1.3" fill="#ececec"/></svg>
<div style="position:absolute;left:154.80px;top:446px;font-size:13.5px;line-height:13.5px;font-weight:400;color:#444;white-space:pre;transform:scaleX(0.9461);transform-origin:0 0;">System Inventory</div>
<svg style="position:absolute;left:280px;top:446.5px" width="8" height="13" viewBox="0 0 8 13"><path d="M2.4 8.5 V2.2 A1.6 1.6 0 0 1 5.6 2.2 V8.5 A2.9 2.9 0 1 1 2.4 8.5 Z" fill="none" stroke="#333" stroke-width="1.1"/><circle cx="4" cy="10.2" r="1.6" fill="#333"/><rect x="3.5" y="5" width="1" height="5" fill="#333"/></svg>
<div style="position:absolute;left:290.70px;top:446px;font-size:13.5px;line-height:13.5px;font-weight:400;color:#444;white-space:pre;transform:scaleX(0.9345);transform-origin:0 0;">Checks</div>
<svg style="position:absolute;left:359.4px;top:447px" width="11.5" height="11.5" viewBox="0 0 11.5 11.5"><circle cx="5.75" cy="5.75" r="3.8" fill="none" stroke="#222" stroke-width="2.3"/><g stroke="#222" stroke-width="2.2"><path d="M5.75 0 V11.5 M0 5.75 H11.5 M1.7 1.7 L9.8 9.8 M9.8 1.7 L1.7 9.8"/></g><circle cx="5.75" cy="5.75" r="1.5" fill="#ececec"/></svg>
<div style="position:absolute;left:372.63px;top:446px;font-size:13.5px;line-height:13.5px;font-weight:400;color:#444;white-space:pre;transform:scaleX(0.9733);transform-origin:0 0;">Moni. Params.</div>
<svg style="position:absolute;left:483px;top:447px" width="15" height="12" viewBox="0 0 15 12"><path d="M1 0 V11 H15" fill="none" stroke="#222" stroke-width="1.6"/><path d="M3 8.5 L6.5 4.5 L9 7 L13.5 2" fill="none" stroke="#222" stroke-width="1.8"/></svg>
<div style="position:absolute;left:500.52px;top:446px;font-size:13.5px;line-height:13.5px;font-weight:400;color:#444;white-space:pre;transform:scaleX(0.9766);transform-origin:0 0;">Performance</div>
<svg style="position:absolute;left:602.6px;top:447.5px" width="13" height="12" viewBox="0 0 13 12"><path d="M1 1 L6 6" stroke="#333" stroke-width="1.6"/><path d="M5 5 L7.5 4.5 L12 10 L10.5 11.5 L5 7 Z" fill="#fff" stroke="#333" stroke-width="1.1"/></svg>
<div style="position:absolute;left:619.00px;top:446px;font-size:13.5px;line-height:13.5px;font-weight:400;color:#444;white-space:pre;transform:scaleX(0.9284);transform-origin:0 0;">Changes</div>
<div style="position:absolute;left:695.50px;top:445px;font-size:14px;line-height:14px;font-weight:700;color:#111;white-space:pre;transform:scaleX(0.8308);transform-origin:0 0;">%</div>
<div style="position:absolute;left:710.60px;top:446px;font-size:13.5px;line-height:13.5px;font-weight:400;color:#333;white-space:pre;transform:scaleX(0.9611);transform-origin:0 0;">Availabilities</div>
<svg style="position:absolute;left:808px;top:447px" width="12.5" height="12.5" viewBox="0 0 12.5 12.5"><path d="M1.5 11 L6.5 6" stroke="#222" stroke-width="2.6" stroke-linecap="round"/><path d="M5.5 4.5 A3.6 3.6 0 0 1 10 0.6 L8 2.8 L9.7 4.5 L11.9 2.5 A3.6 3.6 0 0 1 8 7" fill="#222"/></svg>
<div style="position:absolute;left:823.02px;top:446px;font-size:13.5px;line-height:13.5px;font-weight:400;color:#444;white-space:pre;transform:scaleX(0.9763);transform-origin:0 0;">Maintenance</div>
<svg style="position:absolute;left:924.5px;top:448px" width="13" height="10" viewBox="0 0 13 10"><rect x="0" y="0" width="13" height="10" rx="1" fill="#222"/><path d="M0.5 1 L6.5 5.5 L12.5 1" fill="none" stroke="#ececec" stroke-width="1.1"/></svg>
<div style="position:absolute;left:940.05px;top:446px;font-size:13.5px;line-height:13.5px;font-weight:400;color:#444;white-space:pre;transform:scaleX(0.9519);transform-origin:0 0;">Notification Messages</div>
<div style="position:absolute;left:1031.4px;top:436.3px;width:23.6px;height:32px;background:#ececec;border:1px solid #d0d0d0"></div>
<svg style="position:absolute;left:1036.5px;top:445.5px" width="12" height="15" viewBox="0 0 12 15"><path d="M3.8 2.2 L8.6 7.5 L3.8 12.8" fill="none" stroke="#999" stroke-width="2.4"/></svg>
<div style="position:absolute;left:0px;top:395px;width:1px;height:512px;background:#cdcdcd"></div>
<div style="position:absolute;left:7.00px;top:471px;font-size:13px;line-height:13px;font-weight:400;color:#222;white-space:pre;transform:scaleX(0.9648);transform-origin:0 0;">Timezone:</div>
<div style="position:absolute;left:6px;top:493px;width:149.5px;height:19px;background:#fff;border:1px solid #666;border-radius:2px"></div>
<div style="position:absolute;left:10.55px;top:496px;font-size:13px;line-height:13px;font-weight:400;color:#111;white-space:pre;transform:scaleX(0.9475);transform-origin:0 0;">UTC</div>
<svg style="position:absolute;left:140px;top:499px" width="11" height="8" viewBox="0 0 11 8"><path d="M1 1.2 L5.5 5.7 L10 1.2" fill="none" stroke="#111" stroke-width="2.1"/></svg>
<svg style="position:absolute;left:358.5px;top:474px" width="6" height="8" viewBox="0 0 6 8"><path d="M5 0.5 V7.5 L1 4 Z" fill="#888"/></svg>
<div style="position:absolute;left:375.40px;top:471px;font-size:13px;line-height:13px;font-weight:400;color:#222;white-space:pre;transform:scaleX(0.9375);transform-origin:0 0;">Since:</div>
<div style="position:absolute;left:410.4px;top:467.5px;width:96.6px;height:23px;background:#fff;border:1px solid #dcdcdc"></div>
<div style="position:absolute;left:416.00px;top:472px;font-size:13.5px;line-height:13.5px;font-weight:400;color:#222;white-space:pre;transform:scaleX(0.9651);transform-origin:0 0;">Jul 27, 2020</div>
<div style="position:absolute;left:507px;top:467px;width:23.3px;height:23.3px;background:#ececec;border:1px solid #d6d6d6"></div>
<svg style="position:absolute;left:511.2px;top:471.5px" width="15" height="15" viewBox="0 0 15 15"><rect x="0.6" y="2" width="13.8" height="12.4" fill="none" stroke="#666" stroke-width="1.2"/><rect x="0.6" y="2" width="13.8" height="3" fill="#666"/><rect x="3" y="0" width="1.6" height="3.5" fill="#666"/><rect x="10.4" y="0" width="1.6" height="3.5" fill="#666"/><path d="M4.3999999999999995 5 V14" stroke="#666" stroke-width="0.9"/><path d="M7.5 5 V14" stroke="#666" stroke-width="0.9"/><path d="M10.6 5 V14" stroke="#666" stroke-width="0.9"/><path d="M0.6 7.8 H14.4" stroke="#666" stroke-width="0.9"/><path d="M0.6 10.5 H14.4" stroke="#666" stroke-width="0.9"/></svg>
<div style="position:absolute;left:531.79px;top:471px;font-size:13px;line-height:13px;font-weight:400;color:#222;white-space:pre;transform:scaleX(1.0069);transform-origin:0 0;">Until:</div>
<div style="position:absolute;left:561.6px;top:467.5px;width:96.4px;height:23px;background:#fff;border:1px solid #dcdcdc"></div>
<div style="position:absolute;left:567.00px;top:472px;font-size:13.5px;line-height:13.5px;font-weight:400;color:#222;white-space:pre;transform:scaleX(0.9474);transform-origin:0 0;">Aug 3, 2020</div>
<div style="position:absolute;left:658px;top:467px;width:23.3px;height:23.3px;background:#ececec;border:1px solid #d6d6d6"></div>
<svg style="position:absolute;left:662.2px;top:471.5px" width="15" height="15" viewBox="0 0 15 15"><rect x="0.6" y="2" width="13.8" height="12.4" fill="none" stroke="#666" stroke-width="1.2"/><rect x="0.6" y="2" width="13.8" height="3" fill="#666"/><rect x="3" y="0" width="1.6" height="3.5" fill="#666"/><rect x="10.4" y="0" width="1.6" height="3.5" fill="#666"/><path d="M4.3999999999999995 5 V14" stroke="#666" stroke-width="0.9"/><path d="M7.5 5 V14" stroke="#666" stroke-width="0.9"/><path d="M10.6 5 V14" stroke="#666" stroke-width="0.9"/><path d="M0.6 7.8 H14.4" stroke="#666" stroke-width="0.9"/><path d="M0.6 10.5 H14.4" stroke="#666" stroke-width="0.9"/></svg>
<svg style="position:absolute;left:690.5px;top:474px" width="6" height="8" viewBox="0 0 6 8"><path d="M1 0.5 V7.5 L5 4 Z" fill="#888"/></svg>
<div style="position:absolute;left:358.50px;top:496px;font-size:13px;line-height:13px;font-weight:400;color:#333;white-space:pre;transform:scaleX(0.9094);transform-origin:0 0;">Today</div>
<div style="position:absolute;left:399.59px;top:496px;font-size:13px;line-height:13px;font-weight:400;color:#333;white-space:pre;transform:scaleX(0.9098);transform-origin:0 0;">Last 7 Days</div>
<div style="position:absolute;left:472.06px;top:496px;font-size:13px;line-height:13px;font-weight:400;color:#333;white-space:pre;transform:scaleX(0.9432);transform-origin:0 0;">Last Month</div>
<div style="position:absolute;left:543.50px;top:496px;font-size:13px;line-height:13px;font-weight:400;color:#333;white-space:pre;transform:scaleX(0.9172);transform-origin:0 0;">Current Month</div>
<div style="position:absolute;left:630.00px;top:496px;font-size:13px;line-height:13px;font-weight:400;color:#333;white-space:pre;transform:scaleX(0.8999);transform-origin:0 0;">Current Year</div>
<div style="position:absolute;left:2px;top:515px;width:1054px;height:392px;background:#fff"></div>
<div style="position:absolute;left:0px;top:515px;width:2px;height:392px;background:#d0d0d0"></div>
<div style="position:absolute;left:7.3px;top:523px;width:399.5px;height:124.8px;background:#efefef;border:1px solid #cbcbcb"></div>
<div style="position:absolute;left:18px;top:518px;width:64px;height:13px;background:#fff"></div>
<div style="position:absolute;left:22.30px;top:517px;font-size:13px;line-height:13px;font-weight:700;color:#666;white-space:pre;transform:scaleX(0.9197);transform-origin:0 0;">Summary</div>
<div style="position:absolute;left:26.20px;top:551px;font-size:13px;line-height:13px;font-weight:700;color:#111;white-space:pre;transform:scaleX(0.9126);transform-origin:0 0;">Uptime</div>
<div style="position:absolute;left:335.50px;top:552px;font-size:12.5px;line-height:12.5px;font-weight:400;color:#333;white-space:pre;transform:scaleX(0.9961);transform-origin:0 0;">84.649 %</div>
<div style="position:absolute;left:26.20px;top:571px;font-size:13px;line-height:13px;font-weight:700;color:#111;white-space:pre;transform:scaleX(0.9332);transform-origin:0 0;">Unplanned Downtime</div>
<div style="position:absolute;left:343.00px;top:572px;font-size:12.5px;line-height:12.5px;font-weight:400;color:#333;white-space:pre;transform:scaleX(0.9835);transform-origin:0 0;">0.018 %</div>
<div style="position:absolute;left:26.20px;top:591px;font-size:13px;line-height:13px;font-weight:700;color:#111;white-space:pre;transform:scaleX(0.9418);transform-origin:0 0;">Planned Downtime</div>
<div style="position:absolute;left:335.50px;top:592px;font-size:12.5px;line-height:12.5px;font-weight:400;color:#333;white-space:pre;transform:scaleX(0.9961);transform-origin:0 0;">15.333 %</div>
<div style="position:absolute;left:26.20px;top:613px;font-size:13px;line-height:13px;font-weight:700;color:#111;white-space:pre;transform:scaleX(0.9388);transform-origin:0 0;">Achieved Uptime</div>
<div style="position:absolute;left:335.50px;top:614px;font-size:12.5px;line-height:12.5px;font-weight:400;color:#333;white-space:pre;transform:scaleX(0.9961);transform-origin:0 0;">99.982 %</div>
<div style="position:absolute;left:25px;top:609.2px;width:181px;height:1.2px;background:#d2d2d2"></div>
<div style="position:absolute;left:208px;top:609.2px;width:180px;height:1.2px;background:#d2d2d2"></div>
<svg style="position:absolute;left:0;top:0" width="1056" height="907"><circle cx="484.6" cy="589.8" r="59.6" fill="#20803e"/><path d="M484.6 589.8 L484.6 530.1999999999999 A59.6 59.6 0 0 0 435.66 555.79 Z" fill="#808080" stroke="#fff" stroke-width="0.5"/></svg>
<div style="position:absolute;left:558px;top:561px;width:152.5px;height:57.5px;background:#fff;border:1px solid #111"></div>
<div style="position:absolute;left:561.5px;top:567.5px;width:8px;height:8px;border-radius:50%;background:#20803e;border:0.5px solid rgba(0,0,0,0.25)"></div>
<div style="position:absolute;left:572.90px;top:565px;font-size:13px;line-height:13px;font-weight:400;color:#111;white-space:pre;transform:scaleX(1.1015);transform-origin:0 0;">Uptime</div>
<div style="position:absolute;left:561.5px;top:585.5px;width:8px;height:8px;border-radius:50%;background:#808080;border:0.5px solid rgba(0,0,0,0.25)"></div>
<div style="position:absolute;left:572.93px;top:583px;font-size:13px;line-height:13px;font-weight:400;color:#111;white-space:pre;transform:scaleX(1.0659);transform-origin:0 0;">Planned Downtime</div>
<div style="position:absolute;left:561.5px;top:603.5px;width:8px;height:8px;border-radius:50%;background:#d42d35;border:0.5px solid rgba(0,0,0,0.25)"></div>
<div style="position:absolute;left:572.92px;top:601px;font-size:13px;line-height:13px;font-weight:400;color:#111;white-space:pre;transform:scaleX(1.0767);transform-origin:0 0;">Unplanned Downtime</div>
<svg style="position:absolute;left:722px;top:533px" width="14" height="10" viewBox="0 0 14 10"><path d="M0.6 0.5 V9.4 H13.5" fill="none" stroke="#666" stroke-width="1.1"/><rect x="3" y="5.5" width="1.5" height="3.4" fill="#666"/><rect x="5.6" y="3.5" width="1.5" height="5.4" fill="#666"/><rect x="8.2" y="1.8" width="1.5" height="7.1" fill="#666"/><rect x="10.8" y="3" width="1.5" height="5.9" fill="#666"/></svg>
<div style="position:absolute;left:740.50px;top:532px;font-size:12px;line-height:12px;font-weight:400;color:#222;white-space:pre;transform:scaleX(0.9886);transform-origin:0 0;">Show Availabilities Chart</div>
<svg style="position:absolute;left:8.5px;top:674.8px" width="11" height="10.5" viewBox="0 0 11 10.5"><path d="M1.2 7.6 L7.6 1.2 L9.8 3.4 L3.4 9.8 L0.6 10.4 Z" fill="#bdbdbd"/><path d="M8.3 0.5 L9.3 -0.5 L11.5 1.7 L10.5 2.7 Z" fill="#bdbdbd"/></svg>
<div style="position:absolute;left:24.68px;top:674px;font-size:12.5px;line-height:12.5px;font-weight:400;color:#bdbdbd;white-space:pre;transform:scaleX(0.9162);transform-origin:0 0;">Edit</div>
<svg style="position:absolute;left:62px;top:674.5px" width="11" height="11" viewBox="0 0 11 11"><path d="M2.6 3.4 A4.3 4.3 0 1 1 1.6 6.4" fill="none" stroke="#bdbdbd" stroke-width="1.9"/><path d="M0.4 0.6 V5.4 H5.2 Z" fill="#bdbdbd"/></svg>
<div style="position:absolute;left:77.66px;top:674px;font-size:12.5px;line-height:12.5px;font-weight:400;color:#bdbdbd;white-space:pre;transform:scaleX(0.9389);transform-origin:0 0;">Restore</div>
<svg style="position:absolute;left:136.4px;top:674.5px" width="10" height="11" viewBox="0 0 10 11"><rect x="0" y="1.5" width="10" height="1.5" fill="#bdbdbd"/><rect x="3" y="0" width="4" height="2" fill="#bdbdbd"/><path d="M1 3.5 H9 L8.4 11 H1.6 Z" fill="#bdbdbd"/><path d="M3.7 5 V9.6 M6.3 5 V9.6" stroke="#fff" stroke-width="0.9"/></svg>
<div style="position:absolute;left:151.57px;top:674px;font-size:12.5px;line-height:12.5px;font-weight:400;color:#bdbdbd;white-space:pre;transform:scaleX(0.9295);transform-origin:0 0;">Delete</div>
<div style="position:absolute;left:196px;top:672px;width:1px;height:14.2px;background:#ccc"></div>
<div style="position:absolute;left:202.20px;top:673px;font-size:13px;line-height:13px;font-weight:400;color:#222;white-space:pre;transform:scaleX(0.9493);transform-origin:0 0;">Service:</div>
<div style="position:absolute;left:251.2px;top:670.3px;width:73.2px;height:18px;background:#fff;border:1px solid #555;border-radius:2px"></div>
<div style="position:absolute;left:256.50px;top:673px;font-size:13px;line-height:13px;font-weight:400;color:#111;white-space:pre;transform:scaleX(0.9216);transform-origin:0 0;">SYSTEM</div>
<svg style="position:absolute;left:310px;top:676px" width="10.5" height="7.5" viewBox="0 0 10.5 7.5"><path d="M1 1.2 L5.25 5.5 L9.5 1.2" fill="none" stroke="#111" stroke-width="2"/></svg>
<svg style="position:absolute;left:335.5px;top:674.6px" width="11" height="10.5" viewBox="0 0 11 10.5"><path d="M2.4 3 A4.4 4.4 0 1 1 1.3 6.3" fill="none" stroke="#444" stroke-width="1.3"/><path d="M0.3 1 V4.8 H4 Z" fill="#444"/><path d="M5.8 3 V5.6 L7.6 7" fill="none" stroke="#444" stroke-width="1.1"/></svg>
<div style="position:absolute;left:352.80px;top:674px;font-size:12px;line-height:12px;font-weight:400;color:#222;white-space:pre;transform:scaleX(0.9804);transform-origin:0 0;">Go to check history</div>
<div style="position:absolute;left:464.2px;top:672px;width:1px;height:14.2px;background:#ccc"></div>
<div style="position:absolute;left:470.40px;top:673px;font-size:13px;line-height:13px;font-weight:400;color:#222;white-space:pre;transform:scaleX(1.0034);transform-origin:0 0;">Status Filter:</div>
<div style="position:absolute;left:547.4px;top:670.3px;width:76.6px;height:18px;background:#fff;border:1px solid #555;border-radius:2px"></div>
<div style="position:absolute;left:552.50px;top:673px;font-size:13px;line-height:13px;font-weight:400;color:#111;white-space:pre;transform:scaleX(1.0303);transform-origin:0 0;">All</div>
<svg style="position:absolute;left:610px;top:676px" width="10.5" height="7.5" viewBox="0 0 10.5 7.5"><path d="M1 1.2 L5.25 5.5 L9.5 1.2" fill="none" stroke="#111" stroke-width="2"/></svg>
<div style="position:absolute;left:629.5px;top:672px;width:1px;height:14.2px;background:#ccc"></div>
<div style="position:absolute;left:633.98px;top:673px;font-size:13px;line-height:13px;font-weight:400;color:#222;white-space:pre;transform:scaleX(1.0197);transform-origin:0 0;">Monitoring Switch Filter:</div>
<div style="position:absolute;left:779px;top:670.3px;width:77px;height:18px;background:#fff;border:1px solid #555;border-radius:2px"></div>
<div style="position:absolute;left:784.00px;top:673px;font-size:13px;line-height:13px;font-weight:400;color:#111;white-space:pre;transform:scaleX(1.0303);transform-origin:0 0;">All</div>
<svg style="position:absolute;left:842px;top:676px" width="10.5" height="7.5" viewBox="0 0 10.5 7.5"><path d="M1 1.2 L5.25 5.5 L9.5 1.2" fill="none" stroke="#111" stroke-width="2"/></svg>
<div style="position:absolute;left:930px;top:671.3px;width:119px;height:19.4px;background:#fff;border:1px solid #dcdcdc"></div>
<svg style="position:absolute;left:1034.8px;top:675.2px" width="13" height="13" viewBox="0 0 13 13"><circle cx="5.2" cy="5.2" r="4" fill="none" stroke="#111" stroke-width="1.9"/><path d="M8.2 8.2 L11.8 11.8" stroke="#111" stroke-width="2.3"/></svg>
<div style="position:absolute;left:725.00px;top:700px;font-size:12.5px;line-height:12.5px;font-weight:400;color:#444;white-space:pre;transform:scaleX(1.0329);transform-origin:0 0;">[ 1 - 25 / 57 ]</div>
<div style="position:absolute;left:803px;top:693px;width:23.399999999999977px;height:23.600000000000023px;background:#f3f3f3;border:1px solid #e3e3e3"></div>
<svg style="position:absolute;left:0;top:0" width="1056" height="907"><path d="M813.7 699.8 L809.2 704.8 L813.7 709.8 M818.7 699.8 L814.2 704.8 L818.7 709.8" fill="none" stroke="#c4c4c4" stroke-width="1.4"/></svg>
<div style="position:absolute;left:833px;top:693px;width:23.5px;height:23.600000000000023px;background:#f3f3f3;border:1px solid #e3e3e3"></div>
<svg style="position:absolute;left:0;top:0" width="1056" height="907"><path d="M846.95 699.3 L841.95 704.8 L846.95 710.3" fill="none" stroke="#c4c4c4" stroke-width="1.4"/></svg>
<div style="position:absolute;left:869px;top:693px;width:38px;height:23.6px;background:#fff;border:1px solid #d8d8d8"></div>
<div style="position:absolute;left:871.30px;top:700px;font-size:12.5px;line-height:12.5px;font-weight:400;color:#333;white-space:pre;transform:scaleX(0.9900);transform-origin:0 0;">1</div>
<div style="position:absolute;left:911.50px;top:700px;font-size:12.5px;line-height:12.5px;font-weight:400;color:#444;white-space:pre;transform:scaleX(1.1114);transform-origin:0 0;">/ 3</div>
<div style="position:absolute;left:939px;top:693px;width:24px;height:23.600000000000023px;background:#e8e8e8;border:1px solid #d8d8d8"></div>
<svg style="position:absolute;left:0;top:0" width="1056" height="907"><path d="M948.8 699.3 L953.8 704.8 L948.8 710.3" fill="none" stroke="#333" stroke-width="1.4"/></svg>
<div style="position:absolute;left:969px;top:693px;width:24px;height:23.600000000000023px;background:#e8e8e8;border:1px solid #d8d8d8"></div>
<svg style="position:absolute;left:0;top:0" width="1056" height="907"><path d="M982.0 699.8 L986.5 704.8 L982.0 709.8 M977.0 699.8 L981.5 704.8 L977.0 709.8" fill="none" stroke="#333" stroke-width="1.4"/></svg>
<div style="position:absolute;left:1002.4px;top:693px;width:49.5px;height:25px;background:#fff;border:1px solid #666;border-radius:2px"></div>
<div style="position:absolute;left:1007.00px;top:700px;font-size:12.5px;line-height:12.5px;font-weight:400;color:#222;white-space:pre;transform:scaleX(1.0751);transform-origin:0 0;">25</div>
<svg style="position:absolute;left:1037px;top:702px" width="10" height="7" viewBox="0 0 10 7"><path d="M1 1 L5 5 L9 1" fill="none" stroke="#222" stroke-width="2"/></svg>
<div style="position:absolute;left:2px;top:723px;width:1054px;height:1px;background:#cfcfcf"></div>
<div style="position:absolute;left:2px;top:724px;width:1035px;height:31px;background:#ececec"></div>
<div style="position:absolute;left:1037px;top:724px;width:17px;height:31px;background:#dcdcdc"></div>
<div style="position:absolute;left:2px;top:755px;width:1035px;height:1px;background:#cfcfcf"></div>
<div style="position:absolute;left:23.40px;top:733px;font-size:13px;line-height:13px;font-weight:700;color:#333;white-space:pre;transform:scaleX(0.9281);transform-origin:0 0;">Period</div>
<div style="position:absolute;left:263.40px;top:733px;font-size:13px;line-height:13px;font-weight:700;color:#333;white-space:pre;transform:scaleX(0.9178);transform-origin:0 0;">Duration</div>
<div style="position:absolute;left:363.00px;top:733px;font-size:13px;line-height:13px;font-weight:700;color:#333;white-space:pre;transform:scaleX(0.9418);transform-origin:0 0;">Status</div>
<div style="position:absolute;left:438.70px;top:733px;font-size:13px;line-height:13px;font-weight:700;color:#333;white-space:pre;transform:scaleX(0.9409);transform-origin:0 0;">Moni. Switch</div>
<div style="position:absolute;left:518.00px;top:733px;font-size:13px;line-height:13px;font-weight:700;color:#333;white-space:pre;transform:scaleX(0.9461);transform-origin:0 0;">Status Info</div>
<div style="position:absolute;left:2px;top:756px;width:1035px;height:30px;background:#fff"></div>
<div style="position:absolute;left:2px;top:786px;width:1035px;height:1px;background:#cecece"></div>
<div style="position:absolute;left:358px;top:756px;width:75px;height:30px;background:#1e7b3a"></div>
<div style="position:absolute;left:433px;top:756px;width:80px;height:30px;background:#c0ffb0"></div>
<div style="position:absolute;left:20.20px;top:764px;font-size:13px;line-height:13px;font-weight:400;color:#333;white-space:pre;transform:scaleX(0.9755);transform-origin:0 0;">2020: Jul,30 17:24:29 - Aug,03 09:01:20</div>
<div style="position:absolute;left:288.17px;top:764px;font-size:13px;line-height:13px;font-weight:400;color:#333;white-space:pre;">3d 15h 36m</div>
<div style="position:absolute;left:360.00px;top:765px;font-size:12.5px;line-height:12.5px;font-weight:400;color:#222;white-space:pre;transform:scaleX(0.9900);transform-origin:0 0;">UP</div>
<div style="position:absolute;left:435.00px;top:765px;font-size:12.5px;line-height:12.5px;font-weight:400;color:#222;white-space:pre;transform:scaleX(0.9900);transform-origin:0 0;">On</div>
<div style="position:absolute;left:2px;top:787px;width:1035px;height:30px;background:#fff"></div>
<div style="position:absolute;left:2px;top:817px;width:1035px;height:1px;background:#cecece"></div>
<div style="position:absolute;left:358px;top:787px;width:75px;height:30px;background:#808080"></div>
<div style="position:absolute;left:433px;top:787px;width:80px;height:30px;background:#dae4f0"></div>
<div style="position:absolute;left:20.20px;top:795px;font-size:13px;line-height:13px;font-weight:400;color:#333;white-space:pre;transform:scaleX(0.9800);transform-origin:0 0;">2020: Jul,30 05:04:54 - Jul,30 17:24:29</div>
<div style="position:absolute;left:306.24px;top:795px;font-size:13px;line-height:13px;font-weight:400;color:#333;white-space:pre;">12h 19m</div>
<div style="position:absolute;left:360.00px;top:796px;font-size:12.5px;line-height:12.5px;font-weight:400;color:#222;white-space:pre;transform:scaleX(0.9900);transform-origin:0 0;">UNKOWN</div>
<div style="position:absolute;left:435.00px;top:796px;font-size:12.5px;line-height:12.5px;font-weight:400;color:#222;white-space:pre;transform:scaleX(0.9900);transform-origin:0 0;">Off</div>
<div style="position:absolute;left:2px;top:818px;width:1035px;height:30px;background:#fff"></div>
<div style="position:absolute;left:2px;top:848px;width:1035px;height:1px;background:#cecece"></div>
<div style="position:absolute;left:358px;top:818px;width:75px;height:30px;background:#1e7b3a"></div>
<div style="position:absolute;left:433px;top:818px;width:80px;height:30px;background:#c0ffb0"></div>
<div style="position:absolute;left:20.20px;top:826px;font-size:13px;line-height:13px;font-weight:400;color:#333;white-space:pre;transform:scaleX(0.9800);transform-origin:0 0;">2020: Jul,30 04:16:41 - Jul,30 05:04:54</div>
<div style="position:absolute;left:305.64px;top:826px;font-size:13px;line-height:13px;font-weight:400;color:#333;white-space:pre;">48m 12s</div>
<div style="position:absolute;left:360.00px;top:827px;font-size:12.5px;line-height:12.5px;font-weight:400;color:#222;white-space:pre;transform:scaleX(0.9900);transform-origin:0 0;">UP</div>
<div style="position:absolute;left:435.00px;top:827px;font-size:12.5px;line-height:12.5px;font-weight:400;color:#222;white-space:pre;transform:scaleX(0.9900);transform-origin:0 0;">On</div>
<div style="position:absolute;left:2px;top:849px;width:1035px;height:30px;background:#fff"></div>
<div style="position:absolute;left:2px;top:879px;width:1035px;height:1px;background:#cecece"></div>
<div style="position:absolute;left:358px;top:849px;width:75px;height:30px;background:#808080"></div>
<div style="position:absolute;left:433px;top:849px;width:80px;height:30px;background:#dae4f0"></div>
<div style="position:absolute;left:20.20px;top:857px;font-size:13px;line-height:13px;font-weight:400;color:#333;white-space:pre;transform:scaleX(0.9800);transform-origin:0 0;">2020: Jul,30 04:09:14 - Jul,30 04:16:41</div>
<div style="position:absolute;left:312.87px;top:857px;font-size:13px;line-height:13px;font-weight:400;color:#333;white-space:pre;">7m 27s</div>
<div style="position:absolute;left:360.00px;top:858px;font-size:12.5px;line-height:12.5px;font-weight:400;color:#222;white-space:pre;transform:scaleX(0.9900);transform-origin:0 0;">UNKOWN</div>
<div style="position:absolute;left:435.00px;top:858px;font-size:12.5px;line-height:12.5px;font-weight:400;color:#222;white-space:pre;transform:scaleX(0.9900);transform-origin:0 0;">Off</div>
<div style="position:absolute;left:2px;top:880px;width:1035px;height:30px;background:#fff"></div>
<div style="position:absolute;left:2px;top:910px;width:1035px;height:1px;background:#cecece"></div>
<div style="position:absolute;left:358px;top:880px;width:75px;height:30px;background:#1e7b3a"></div>
<div style="position:absolute;left:433px;top:880px;width:80px;height:30px;background:#c0ffb0"></div>
<div style="position:absolute;left:20.20px;top:888px;font-size:13px;line-height:13px;font-weight:400;color:#333;white-space:pre;transform:scaleX(0.9800);transform-origin:0 0;">2020: Jul,29 23:08:58 - Jul,30 04:09:14</div>
<div style="position:absolute;left:313.47px;top:888px;font-size:13px;line-height:13px;font-weight:400;color:#333;white-space:pre;">5h 00m</div>
<div style="position:absolute;left:360.00px;top:889px;font-size:12.5px;line-height:12.5px;font-weight:400;color:#222;white-space:pre;transform:scaleX(0.9900);transform-origin:0 0;">UP</div>
<div style="position:absolute;left:435.00px;top:889px;font-size:12.5px;line-height:12.5px;font-weight:400;color:#222;white-space:pre;transform:scaleX(0.9900);transform-origin:0 0;">On</div>
<div style="position:absolute;left:1037px;top:756px;width:17px;height:151px;background:#f1f1f1"></div>
<svg style="position:absolute;left:1037px;top:756px" width="17" height="20" viewBox="0 0 17 20"><path d="M4.5 10.8 H12.5 L8.5 6.8 Z" fill="#a3a3a3"/></svg>
<div style="position:absolute;left:1039.2px;top:773px;width:12.6px;height:27.5px;background:#c1c1c1"></div>
<div style="position:absolute;left:1054px;top:395px;width:2px;height:512px;background:#cfcfcf"></div>
<div style="position:absolute;left:0px;top:905px;width:1056px;height:2px;background:#d0d0d0"></div>
<svg style="position:absolute;left:0;top:0" width="1056" height="907"><path d="M952.1 637 L952.1 652.2 L955.5 648.9 L958.6 654.1 L960.4 653.2 L957.7 648.2 L962.3 647.9 Z" fill="#fff" stroke="#111" stroke-width="1.15" stroke-linejoin="round"/></svg>
</body></html>
